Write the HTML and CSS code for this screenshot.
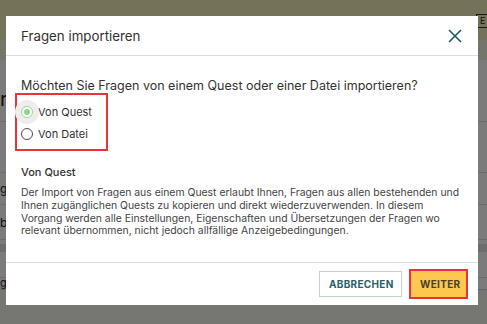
FILE: index.html
```html
<!DOCTYPE html>
<html lang="de">
<head>
<meta charset="utf-8">
<title>Fragen importieren</title>
<link rel="stylesheet" href="styles.css">
</head>
<body>
<div class="page">
  <header class="page-header"><span class="header-btn">E</span></header>
  <div class="page-subbar"></div>
  <div class="page-row row-title"><span class="big">r</span></div>
  <div class="page-row row-a"></div>
  <div class="page-row row-b"><span>g</span></div>
  <div class="page-row row-c"><span>b</span></div>
  <div class="page-row row-dark"></div>
  <div class="page-row row-d"></div>
  <div class="page-row row-e"><span>getext</span></div>
  <div class="page-bottom"></div>
</div>

<div class="overlay">
  <div class="modal" role="dialog">
    <div class="modal-header">
      <h2 class="modal-title">Fragen importieren</h2>
      <button class="close-btn" aria-label="Schließen">
        <svg width="14" height="14" viewBox="0 0 14 14"><path d="M1 1L13 13M13 1L1 13" stroke="#1f5a5c" stroke-width="1.6" fill="none"/></svg>
      </button>
    </div>
    <div class="modal-body">
      <p class="question">Möchten Sie Fragen von einem Quest oder einer Datei importieren?</p>
      <div class="radio-group">
        <label class="radio-row selected"><span class="radio"></span><span>Von Quest</span></label>
        <label class="radio-row"><span class="radio"></span><span>Von Datei</span></label>
      </div>
      <h3 class="sub-heading">Von Quest</h3>
      <p class="description">Der Import von Fragen aus einem Quest erlaubt Ihnen, Fragen aus allen bestehenden und Ihnen zugänglichen Quests zu kopieren und direkt wiederzuverwenden. In diesem Vorgang werden alle Einstellungen, Eigenschaften und Übersetzungen der Fragen wo relevant übernommen, nicht jedoch allfällige Anzeigebedingungen.</p>
    </div>
    <div class="modal-footer">
      <button class="btn btn-outline">ABBRECHEN</button>
      <button class="btn btn-primary">WEITER</button>
    </div>
  </div>
</div>
</body>
</html>
```

FILE: styles.css
```css
* { box-sizing: border-box; }
html, body { margin: 0; padding: 0; }
body {
  width: 487px;
  height: 324px;
  overflow: hidden;
  font-family: Inter, "Noto Sans", sans-serif;
  color: #333;
  background: #f6f6f6;
}

/* background page */
.page {
  height: 324px;
  display: flex;
  flex-direction: column;
  overflow: hidden;
}
.page-header {
  height: 40px;
  background: #e8e6b4;
  display: flex;
  justify-content: flex-end;
  align-items: flex-start;
  padding-top: 14px;
  flex: none;
}
.header-btn {
  width: 16px;
  height: 14px;
  margin-right: -5px;
  border: 1px solid #333;
  font-size: 9px;
  line-height: 12px;
  padding-left: 3px;
  color: #222;
}
.page-subbar { height: 20px; background: #ecebd8; flex: none; }
.page-row {
  border-bottom: 1px solid #d6d6d6;
  display: flex;
  align-items: center;
  justify-content: flex-start;
  width: 100%;
  white-space: nowrap;
  font-size: 12px;
  color: #222;
  flex: none;
}
.page-row span { display: block; }
.row-title { height: 62px; padding-top: 16px; }
.row-title .big { font-size: 20px; }
.row-a { height: 51px; }
.row-b { height: 32px; }
.row-c { height: 35px; }
.row-dark { height: 8px; background: #dcdcdc; border: none; margin-top: 4px; }
.row-d { height: 26px; }
.row-e { height: 12px; border-bottom: 1px solid #c8c8c8; align-items: flex-end; }
.row-e span { line-height: 12px; font-size: 11px; }
.page-bottom { flex: 1; background: #ecece4; }

/* overlay & modal */
.overlay {
  position: fixed;
  inset: 0;
  background: rgba(0, 0, 0, 0.5);
  padding: 16px 9px 0 6px;
}
.modal {
  width: 472px;
  height: 289px;
  background: #fff;
  display: flex;
  flex-direction: column;
}
.modal-header {
  height: 40px;
  border-bottom: 1px solid #dcdcdc;
  display: flex;
  align-items: center;
  justify-content: space-between;
  padding: 0 16px 0 15px;
  flex: none;
}
.modal-title {
  margin: 0;
  font-size: 13.3px;
  font-weight: 400;
  color: #333;
  padding-top: 1px;
}
.close-btn {
  border: none;
  background: none;
  padding: 0;
  width: 14px;
  height: 14px;
  display: block;
}
.close-btn svg { display: block; }

.modal-body {
  flex: 1;
  padding: 22px 12px 0 15px;
}
.question {
  margin: 0;
  font-size: 12.5px;
  line-height: 16px;
  color: #333;
}
.radio-group {
  margin: -1px 0 0 -6px;
  width: 93px;
  border: 2px solid #ee2f3e;
  padding: 6px 0 4px 4px;
}
.radio-row {
  height: 22px;
  display: flex;
  align-items: center;
  gap: 5px;
  font-size: 11px;
  color: #333;
}
.radio {
  width: 12px;
  height: 12px;
  border-radius: 50%;
  border: 1px solid #4a4a4a;
  background: #fff;
  position: relative;
  flex: none;
}
.selected .radio {
  border-color: #9fd49a;
  box-shadow: 0 0 0 6px #ededed;
}
.selected .radio::after {
  content: "";
  position: absolute;
  left: 2px;
  top: 2px;
  width: 6px;
  height: 6px;
  border-radius: 50%;
  background: #8fd68a;
}

.sub-heading {
  margin: 14px 0 0;
  font-size: 11px;
  line-height: 15px;
  font-weight: 500;
  color: #333;
}
.description {
  margin: 7px 0 0;
  font-size: 10.4px;
  line-height: 12.8px;
  color: #444;
}

.modal-footer {
  height: 43px;
  border-top: 1px solid #dcdcdc;
  display: flex;
  justify-content: flex-end;
  align-items: center;
  gap: 9px;
  padding: 0 12px 1px 0;
  flex: none;
}
.btn {
  height: 26px;
  font-family: Inter, "Noto Sans", sans-serif;
  font-size: 10px;
  font-weight: 700;
  letter-spacing: 0.3px;
  padding: 0 9px;
  cursor: pointer;
}
.btn-outline {
  width: 83px;
  background: #fff;
  border: 1px solid #c6d3c3;
  color: #2b5f6a;
}
.btn-primary {
  width: 55px;
  background: #fdc84f;
  border: none;
  color: #4a3f2a;
  box-shadow: 0 0 0 2px #ee2f3e;
}
```
